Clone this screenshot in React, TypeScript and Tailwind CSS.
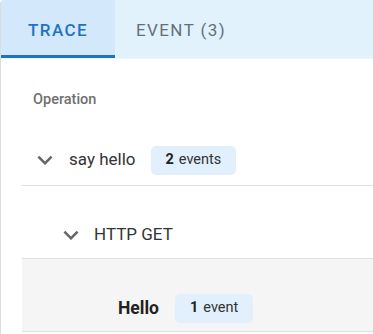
import React from "react";

function Chevron() {
  return (
    <svg width="30" height="30" viewBox="0 0 24 24" className="shrink-0">
      <path d="M7.41 8.59 12 13.17l4.59-4.58L18 10l-6 6-6-6 1.41-1.41z" fill="#666" />
    </svg>
  );
}

function Badge({ n, label }: { n: number; label: string }) {
  return (
    <span className="inline-flex items-center h-[29px] px-[15px] rounded-[5px] bg-[#e1f0fc] text-[14.5px] text-[#333]">
      <span className="font-bold text-[#222] mr-[5px]">{n}</span>
      {label}
    </span>
  );
}

export default function App() {
  return (
    <div
      className="w-[373px] h-[334px] overflow-hidden bg-white"
      style={{ fontFamily: "Roboto, 'Noto Sans', sans-serif" }}
    >
      <div className="h-full border-l border-[#dcdcdc] rounded-tl-[4px] overflow-hidden">
        <div className="flex h-[59px] bg-[#e1f2fd] border-b border-[#eef6fc]">
          <div className="w-[114px] flex items-center justify-center bg-[#d3e8fb] border-b-[3px] border-[#1e73c0] pt-[7px] text-[17px] font-medium tracking-[1.4px] text-[#1f74c2]">
            TRACE
          </div>
          <div className="w-[132px] flex items-center justify-center pt-[4px] text-[17px] tracking-[1.4px] text-[#666f77]">
            EVENT (3)
          </div>
        </div>

        <div className="pl-[32px] pt-[31px] h-[76px] text-[14.5px] leading-[20px] font-medium text-[#707070]">Operation</div>

        <div className="ml-[21px] flex items-center h-[51px] pl-[8px] border-b border-[#e0e0e0]">
          <Chevron />
          <span className="ml-[9px] text-[17px] text-[#333] mr-[15px]">say hello</span>
          <Badge n={2} label="events" />
        </div>

        <div className="ml-[21px] flex items-center h-[73px] pl-[34px] pt-[26px] border-b border-[#e0e0e0]">
          <Chevron />
          <span className="ml-[8px] text-[17px] text-[#333]">HTTP GET</span>
        </div>

        <div className="ml-[21px] flex items-center h-[73px] pl-[96px] pt-[26px] bg-[#f5f5f5] border-b border-[#e0e0e0]">
          <span className="text-[17.5px] font-bold text-[#222] mr-[16px]">Hello</span>
          <Badge n={1} label="event" />
        </div>
      </div>
    </div>
  );
}
